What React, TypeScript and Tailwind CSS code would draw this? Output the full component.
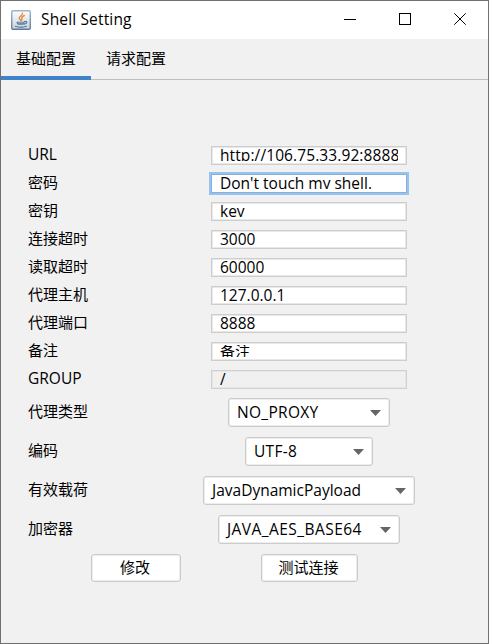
import React from "react";

type Field = {
  label: string;
  labelClass?: string;
  value: string;
  valueClass?: string;
  state?: "focus" | "disabled";
};

const fields: Field[] = [
  { label: "URL", labelClass: "text-[15.5px]", value: "http://106.75.33.92:8888", valueClass: "text-[15.5px] tracking-[0.1px]" },
  { label: "密码", value: "Don't touch my shell.", valueClass: "text-[15.5px]", state: "focus" },
  { label: "密钥", value: "key", valueClass: "text-[15.5px]" },
  { label: "连接超时", value: "3000", valueClass: "text-[15.5px]" },
  { label: "读取超时", value: "60000", valueClass: "text-[15.5px]" },
  { label: "代理主机", value: "127.0.0.1", valueClass: "text-[15.5px]" },
  { label: "代理端口", value: "8888", valueClass: "text-[15.5px]" },
  { label: "备注", value: "备注" },
  { label: "GROUP", labelClass: "text-[15.5px]", value: "/", valueClass: "text-[15.5px]", state: "disabled" },
];

const combos = [
  { label: "代理类型", value: "NO_PROXY", box: "w-[162px]", text: "tracking-[0.3px]" },
  { label: "编码", value: "UTF-8", box: "w-[128px]", text: "tracking-[0.3px]" },
  { label: "有效载荷", value: "JavaDynamicPayload", box: "w-[212px]", text: "tracking-[0px]" },
  { label: "加密器", value: "JAVA_AES_BASE64", box: "w-[182px]", text: "tracking-[0.45px]" },
];

function JavaIcon() {
  return (
    <svg width="20" height="20" viewBox="0 0 20 20" fill="none">
      <defs>
        <linearGradient id="tile" x1="0" y1="0" x2="0" y2="1">
          <stop offset="0" stopColor="#fdfdfd" />
          <stop offset="1" stopColor="#c9d4de" />
        </linearGradient>
        <linearGradient id="edge" x1="0" y1="0" x2="0" y2="1">
          <stop offset="0" stopColor="#a3b5c5" />
          <stop offset="1" stopColor="#5f7c94" />
        </linearGradient>
      </defs>
      <rect x="0.75" y="0.75" width="18.5" height="18.5" rx="1.2" fill="url(#tile)" stroke="url(#edge)" strokeWidth="1.4" />
      <path d="M11.5 3.2c.6 2-3.8 3-3.2 5 .2.9 1 1.300 1.300 2.300M13.300 5.500c-1.600.8-3 1.500-2.600 2.700.3.8.8 1.100-.2 2.300" stroke="#e98a3c" strokeWidth="1.400" strokeLinecap="round" />
      <path d="M5.500 11.700h8.200c-.1 1.600-.8 2.900-1.700 3.100H7.200c-.9-.2-1.600-1.500-1.700-3.100Z" fill="#527b9c" />
      <path d="M13.600 11.600c3-.9 3.200 1.900-.4 2.500M4.300 16.300c3 1 8 1 11-.1" stroke="#527b9c" strokeWidth="1.200" strokeLinecap="round" />
      <path d="M6.800 12.900h5.600" stroke="#c2d0dc" strokeWidth=".7" />
    </svg>
  );
}

function TextField({ value, valueClass = "", state }: Field) {
  const look =
    state === "focus"
      ? "border-[#89b0da] bg-white ring-2 ring-[#97c3f3]"
      : state === "disabled"
        ? "border-[#d0d0d0] bg-[#f0f0f0] inset-ring inset-ring-[#e6e6e6]"
        : "border-[#cdcdcd] bg-white inset-ring inset-ring-[#e8e8e8]";
  return (
    <div className={`h-[19px] w-[196px] border px-2 py-[2px] ${look}`}>
      <div className="flex h-[12px] items-center overflow-hidden">
        <span className={`whitespace-pre leading-5 ${valueClass}`}>{value}</span>
      </div>
    </div>
  );
}

export default function App() {
  return (
    <div className="flex h-[644px] w-[489px] flex-col overflow-hidden border border-[#707070] bg-[#f1f1f1] font-['Open_Sans','Noto_Sans_CJK_SC',sans-serif] text-[15px] leading-5 text-black">
      <header className="flex h-[38px] shrink-0 items-center bg-white pl-[10px]">
        <JavaIcon />
        <h1 className="ml-[10px] pb-[2px] text-[15.5px] font-normal tracking-[0.15px]">Shell Setting</h1>
        <div className="ml-auto flex items-center">
          <svg width="146" height="38" viewBox="342 1 146 38" fill="none" stroke="#000" shapeRendering="crispEdges">
            <path d="M344 19.500h12" />
            <rect x="399.500" y="13.500" width="11" height="11" />
            <path d="M454.300 13.300l11.400 11.400M465.700 13.300l-11.400 11.400" shapeRendering="auto" />
          </svg>
        </div>
      </header>

      <nav className="flex h-[41px] shrink-0 border-b border-[#bfbfbf]">
        <div className="flex h-[41px] w-[90px] items-center justify-center border-b-4 border-[#4083c9]">基础配置</div>
        <div className="flex h-[37px] w-[90px] items-center justify-center">请求配置</div>
      </nav>

      <main className="pt-[61px]">
        {fields.map((f) => (
          <div key={f.label} className="flex h-7 items-center">
            <span className={`w-[183px] pb-[2px] pl-[27px] ${f.labelClass ?? ""}`}>{f.label}</span>
            <div className="flex w-[250px] justify-center">
              <TextField {...f} />
            </div>
          </div>
        ))}
        {combos.map((c) => (
          <div key={c.label} className="flex h-[39px] items-center">
            <span className="w-[183px] pb-[3px] pl-[27px]">{c.label}</span>
            <div className="flex w-[250px] justify-center">
              <div className={`flex h-[29px] items-center justify-between rounded-[3px] border border-[#cbcbcb] bg-white pl-[8px] pr-[8px] inset-ring inset-ring-[#ededed] ${c.box}`}>
                <span className={`whitespace-pre pb-[2px] text-[15.5px] ${c.text}`}>{c.value}</span>
                <svg width="11" height="6" viewBox="0 0 11 6" fill="#666">
                  <path d="M0 0h11L5.500 6Z" />
                </svg>
              </div>
            </div>
          </div>
        ))}
        <div className="flex pl-[90px] pt-[5px]">
          <button className="h-[28px] w-[90px] rounded-[3px] border border-[#cbcbcb] bg-white pb-[2px] pr-[2px] inset-ring inset-ring-[#ededed]">修改</button>
          <button className="ml-[80px] h-[28px] w-[97px] rounded-[3px] border border-[#cbcbcb] bg-white pb-[2px] pr-[2px] inset-ring inset-ring-[#ededed]">测试连接</button>
        </div>
      </main>
    </div>
  );
}
